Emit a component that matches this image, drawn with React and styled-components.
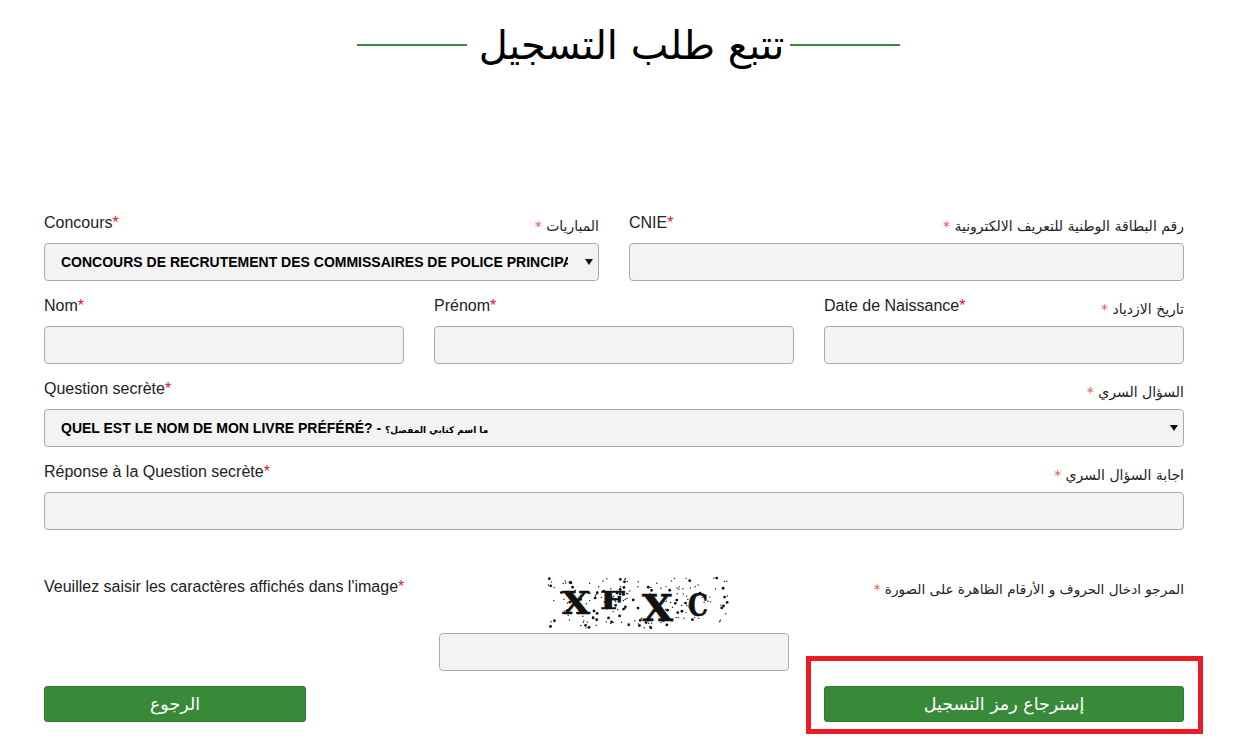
import React from "react";
import styled, { createGlobalStyle } from "styled-components";

const GlobalStyle = createGlobalStyle`
    html, body {
        margin: 0;
        padding: 0;
        background: #fff;
    }
    body {
        font-family: "Liberation Sans", Arial, sans-serif;
        color: #222;
        overflow: hidden;
    }
`;

// captcha noise, same dots on every render
const noise = Array.from({ length: 190 }, (_, i) => {
    const a = Math.sin(i * 12.9898 + 4.1) * 43758.5453;
    const b = Math.sin(i * 78.233 + 1.7) * 24634.6345;
    const c = Math.sin(i * 39.425 + 2.9) * 15731.743;
    return {
        x: (a - Math.floor(a)) * 180,
        y: (b - Math.floor(b)) * 50,
        r: c - Math.floor(c) > 0.7 ? 1.4 : 0.7
    };
});

const letters = [
    { ch: "X", x: 14, y: 36, size: 31, w: 28 },
    { ch: "F", x: 52, y: 31, size: 25, w: 25 },
    { ch: "X", x: 94, y: 43, size: 38, w: 31 },
    { ch: "C", x: 140, y: 38, size: 31, w: 20 }
];

const Captcha = () => (
    <CaptchaImage width="180" height="50" viewBox="0 0 180 50">
        {noise.map((d, i) => <circle key={i} cx={d.x} cy={d.y} r={d.r} fill="#111" />)}
        {letters.map((l, i) => (
            <CaptchaLetter key={i} x={l.x} y={l.y} size={l.size} textLength={l.w} lengthAdjust="spacingAndGlyphs">{l.ch}</CaptchaLetter>
        ))}
    </CaptchaImage>
);

const Field = ({ fr, ar, children }) => (
    <FieldBox>
        <LabelRow>
            {fr && <FrLabel>{fr}<Star>*</Star></FrLabel>}
            {ar && <ArLabel>{ar} <ArStar>*</ArStar></ArLabel>}
        </LabelRow>
        {children}
    </FieldBox>
);

export default function App() {
    return (
        <Page>
            <GlobalStyle />
            <TitleRow>
                <TitleLine />
                <Title>تتبع طلب التسجيل</Title>
                <TitleLine />
            </TitleRow>

            <Form>
                <Row cols={2}>
                    <Field fr="Concours" ar="المباريات">
                        <SelectBox role="combobox">
                            <SelectText>CONCOURS DE RECRUTEMENT DES COMMISSAIRES DE POLICE PRINCIPAUX</SelectText>
                        </SelectBox>
                    </Field>
                    <Field fr="CNIE" ar="رقم البطاقة الوطنية للتعريف الالكترونية">
                        <Input />
                    </Field>
                </Row>
                <Row cols={3}>
                    <Field fr="Nom"><Input /></Field>
                    <Field fr="Prénom"><Input /></Field>
                    <Field fr="Date de Naissance" ar="تاريخ الازدياد"><Input /></Field>
                </Row>
                <Row cols={1}>
                    <Field fr="Question secrète" ar="السؤال السري">
                        <SelectBox role="combobox">
                            <SelectText>QUEL EST LE NOM DE MON LIVRE PRÉFÉRÉ? - <SelectAr>ما اسم كتابي المفضل؟</SelectAr></SelectText>
                        </SelectBox>
                    </Field>
                </Row>
                <Row cols={1}>
                    <Field fr="Réponse à la Question secrète" ar="اجابة السؤال السري">
                        <Input />
                    </Field>
                </Row>

                <CaptchaRow>
                    <CaptchaLabel>Veuillez saisir les caractères affichés dans l'image<Star>*</Star></CaptchaLabel>
                    <CaptchaCol>
                        <Captcha />
                        <CaptchaInput />
                    </CaptchaCol>
                    <CaptchaAr>المرجو ادخال الحروف و الأرقام الظاهرة على الصورة <ArStar>*</ArStar></CaptchaAr>
                </CaptchaRow>

                <ButtonRow>
                    <BackButton type="button">الرجوع</BackButton>
                    <span />
                    <Button type="button">إسترجاع رمز التسجيل</Button>
                </ButtonRow>
            </Form>

            <Highlight />
        </Page>
    );
}

const Page = styled.div`
    position: relative;
    width: 1238px;
    height: 739px;
    overflow: hidden;
`;

const TitleRow = styled.div`
    display: flex;
    justify-content: center;
    align-items: center;
    height: 90px;
    padding-left: 19px;
    gap: 6px;
`;

const TitleLine = styled.div`
    width: 110px;
    height: 2px;
    background: #388a38;
`;

const Title = styled.h1`
    margin: 0 0 0 6px;
    font-family: "DejaVu Sans", serif;
    font-size: 40px;
    font-weight: 400;
    color: #000;
    direction: rtl;
`;

const Form = styled.div`
    display: flex;
    flex-direction: column;
    padding: 114px 54px 0 44px;
`;

const Row = styled.div`
    display: grid;
    grid-template-columns: repeat(${p => p.cols}, minmax(0, 1fr));
    column-gap: 30px;
    margin-bottom: 6px;
`;

const FieldBox = styled.div`
    display: flex;
    flex-direction: column;
    min-width: 0;
`;

const LabelRow = styled.div`
    display: flex;
    justify-content: space-between;
    align-items: flex-start;
    height: 39px;
    padding-top: 9px;
    box-sizing: border-box;
`;

const FrLabel = styled.label`
    font-size: 16px;
    line-height: 20px;
    color: #222;
`;

const Star = styled.span`
    color: #e0141e;
`;

const ArLabel = styled.label`
    font-family: "DejaVu Sans", serif;
    font-size: 14px;
    line-height: 26px;
    color: #222;
    direction: rtl;
    white-space: nowrap;
`;

const ArStar = styled.span`
    color: #f0524f;
`;

const Input = styled.input`
    display: block;
    width: 100%;
    height: 38px;
    box-sizing: border-box;
    background: #f3f3f3;
    border: 1px solid #aaa;
    border-radius: 4px;
    outline: none;
`;

const SelectBox = styled.div`
    position: relative;
    display: flex;
    align-items: center;
    height: 38px;
    box-sizing: border-box;
    padding: 0 30px 0 16px;
    background: #f3f3f3;
    border: 1px solid #aaa;
    border-radius: 4px;

    &::after {
        content: "";
        position: absolute;
        right: 5px;
        top: 15px;
        border-left: 4px solid transparent;
        border-right: 4px solid transparent;
        border-top: 6px solid #111;
    }
`;

const SelectText = styled.div`
    min-width: 0;
    overflow: hidden;
    white-space: nowrap;
    font-size: 14px;
    font-weight: 700;
    color: #000;
`;

const SelectAr = styled.span`
    font-family: "DejaVu Sans", sans-serif;
    font-size: 9px;
`;

const CaptchaRow = styled.div`
    display: grid;
    grid-template-columns: repeat(3, minmax(0, 1fr));
    column-gap: 30px;
    margin-top: 42px;
`;

const CaptchaLabel = styled(FrLabel)`
    white-space: nowrap;
    line-height: 18px;
`;

const CaptchaCol = styled.div`
    display: flex;
    flex-direction: column;
    align-items: center;
    gap: 5px;
`;

const CaptchaImage = styled.svg`
    display: block;
    width: 180px;
    height: 50px;
    margin-left: 48px;
    overflow: visible;
`;

const CaptchaLetter = styled.text`
    font-family: "DejaVu Serif", serif;
    font-weight: 700;
    font-size: ${p => p.size}px;
    fill: #111;
    stroke: #111;
    stroke-width: 0.6px;
`;

const CaptchaInput = styled(Input)`
    width: 350px;
`;

const CaptchaAr = styled(ArLabel)`
    text-align: right;
    font-size: 13.6px;
    line-height: 22px;
`;

const ButtonRow = styled.div`
    display: grid;
    grid-template-columns: repeat(3, minmax(0, 1fr));
    column-gap: 30px;
    margin-top: 15px;
`;

const Button = styled.button`
    display: block;
    width: 100%;
    height: 36px;
    background: #388a38;
    border: 1px solid #2f7a2f;
    border-radius: 3px;
    font-family: "DejaVu Sans", sans-serif;
    font-size: 17.5px;
    color: #fff;
    direction: rtl;
`;

const BackButton = styled(Button)`
    width: 262px;
`;

const Highlight = styled.div`
    position: absolute;
    left: 806px;
    top: 656px;
    width: 397px;
    height: 78px;
    box-sizing: border-box;
    border: 5px solid #ed1c24;
    pointer-events: none;
`;
